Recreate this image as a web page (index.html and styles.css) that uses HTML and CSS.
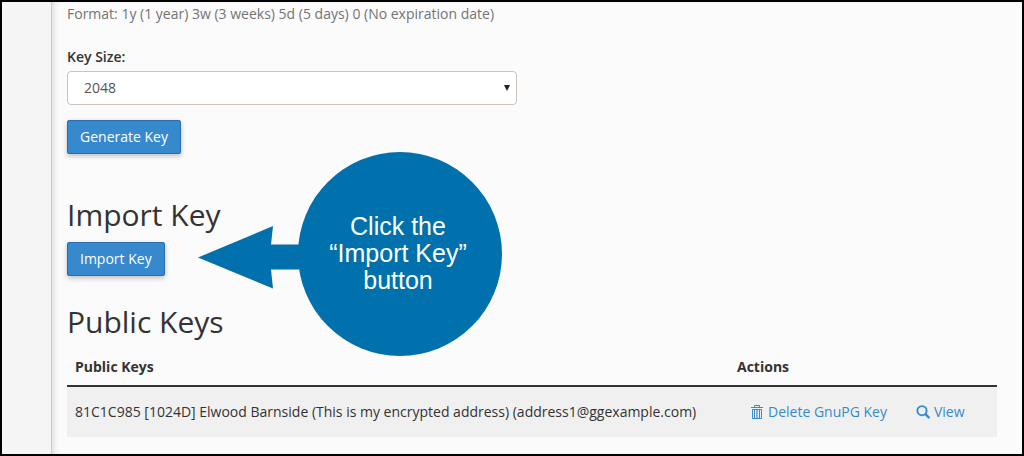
FILE: index.html
```html
<!DOCTYPE html>
<html lang="en">
<head>
<meta charset="utf-8">
<title>GnuPG Keys</title>
<link rel="stylesheet" href="styles.css">
</head>
<body>
<div class="frame">
  <aside class="sidebar"></aside>
  <main class="content">
    <form class="key-form">
      <p class="help">Format: 1y (1 year) 3w (3 weeks) 5d (5 days) 0 (No expiration date)</p>
      <label class="label" for="keysize">Key Size:</label>
      <div class="select-wrap">
        <select class="select" id="keysize"><option>2048</option></select>
        <svg class="caret" viewBox="0 0 6 6" aria-hidden="true"><path d="M0 0h6L3 6z" fill="#222"/></svg>
      </div>
      <button class="btn" type="button">Generate Key</button>
    </form>
    <section class="section">
      <h2 class="heading">Import Key</h2>
      <button class="btn" type="button">Import Key</button>
    </section>
    <section class="section section-keys">
      <h2 class="heading">Public Keys</h2>
      <table class="table">
        <thead>
          <tr><th>Public Keys</th><th class="actions-col">Actions</th></tr>
        </thead>
        <tbody>
          <tr>
            <td>81C1C985 [1024D] Elwood Barnside (This is my encrypted address) (address1@ggexample.com)</td>
            <td>
              <div class="actions">
                <a class="link" href="#delete"><svg class="icon" viewBox="0 0 14 14" aria-hidden="true"><g fill="none" stroke="currentColor"><path d="M1 2.500h12M4.500 2V.5h5V2M2.500 4.500h9v9h-9zM4.500 5v8M9.500 5v8"/><path d="M7 5v8" stroke-width="1.200"/></g></svg>Delete GnuPG Key</a>
                <a class="link" href="#view"><svg class="icon" viewBox="0 0 14 14" aria-hidden="true"><g fill="none" stroke="currentColor"><circle cx="6" cy="5.700" r="4.600" stroke-width="1.900"/><path d="M9.500 9.200l3.300 3.300" stroke-width="2.400" stroke-linecap="round"/></g></svg>View</a>
              </div>
            </td>
          </tr>
        </tbody>
      </table>
    </section>
  </main>
  <div class="callout">
    <svg class="arrow" viewBox="0 0 110 64" aria-hidden="true"><path d="M0 31.500L75 0L73 18.500H110V43.500H73L75 62.500z" fill="#0071ac"/></svg>
    <div class="bubble">Click the<br>“Import Key”<br>button</div>
  </div>
</div>
</body>
</html>
```

FILE: styles.css
```css
* { box-sizing: border-box; }
body {
  margin: 0;
  font: 14px/20px "Open Sans", "Noto Sans", sans-serif;
  color: #333;
  background: #fbfbfb;
}
.frame {
  position: relative;
  display: flex;
  min-height: 100vh;
  border: 2px solid #000;
  overflow: hidden;
}
.sidebar {
  flex: 0 0 49px;
  background: #f5f5f5;
}
.content {
  flex: 1;
  min-width: 0;
  padding: 2px 25px 16px 15px;
  border-left: 1px solid #cfc8c4;
  box-shadow: inset 6px 0 6px -4px #dedede;
}
.help { margin: 0 0 23px; color: #737373; }
.label { display: block; margin-bottom: 4px; font-weight: 600; }
.select-wrap {
  position: relative;
  max-width: 450px;
  margin-bottom: 15px;
}
.select {
  display: block;
  width: 100%;
  height: 34px;
  padding: 6px 16px;
  font: inherit;
  color: #555;
  background: #fff;
  border: 1px solid #ccc4bc;
  border-radius: 4px;
  appearance: none;
}
.caret {
  position: absolute;
  top: 14px;
  right: 7px;
  width: 6px;
  height: 6px;
}
.btn {
  display: block;
  height: 34px;
  padding: 0 12px;
  font: 400 14px/20px "Open Sans", "Noto Sans", sans-serif;
  color: #fff;
  background: #3789cd;
  border: 1px solid #2a6db0;
  border-radius: 2px;
  box-shadow: 0 2px 5px rgba(0, 0, 0, .25);
}
.section { margin-top: 44px; }
.section-keys { margin-top: 29px; }
.heading {
  margin: 0 0 10px;
  font-size: 30px;
  font-weight: 400;
  line-height: 34px;
}
.table { width: 100%; border-collapse: collapse; }
.table th {
  padding: 8px;
  text-align: left;
  font-weight: 700;
  border-bottom: 2px solid #333;
}
.table td { padding: 8px; background: #f0f0f0; }
.actions-col { width: 268px; }
.actions { display: flex; gap: 3px; }
.link {
  display: flex;
  align-items: center;
  gap: 4px;
  padding: 7px 13px;
  color: #3789cd;
  text-decoration: none;
  white-space: nowrap;
}
.icon { width: 14px; height: 14px; }
.callout {
  position: absolute;
  top: 150px;
  left: 196px;
  display: flex;
  align-items: center;
}
.arrow { width: 110px; height: 64px; margin: 8px -10px 0 0; }
.bubble {
  display: flex;
  align-items: center;
  justify-content: center;
  width: 204px;
  height: 204px;
  padding: 0 4px 2px 0;
  border-radius: 50%;
  background: #0071ac;
  color: #fff;
  font: 25px/27px "Liberation Sans", Arial, sans-serif;
  text-align: center;
}
```
